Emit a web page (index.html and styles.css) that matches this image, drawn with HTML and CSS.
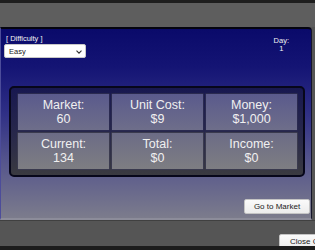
FILE: index.html
```html
<!DOCTYPE html>
<html>
<head>
<meta charset="utf-8">
<link rel="stylesheet" href="styles.css">
</head>
<body>
<div class="screen">
  <div class="topbar"></div>
  <div class="panel">
    <div class="header">
      <div class="difficulty">
        <div class="label">[ Difficulty ]</div>
        <div class="select">
          <span>Easy</span>
          <svg class="chev" width="6" height="4" viewBox="0 0 6 4"><path d="M0.5 0.7 L3 3.2 L5.5 0.7" fill="none" stroke="#333" stroke-width="1.1"/></svg>
        </div>
      </div>
      <div class="day">
        <div>Day:</div>
        <div>1</div>
      </div>
    </div>
    <div class="stats">
      <div class="cell top"><div>Market:</div><div>60</div></div>
      <div class="cell top"><div>Unit Cost:</div><div>$9</div></div>
      <div class="cell top"><div>Money:</div><div>$1,000</div></div>
      <div class="cell bottom"><div>Current:</div><div>134</div></div>
      <div class="cell bottom"><div>Total:</div><div>$0</div></div>
      <div class="cell bottom"><div>Income:</div><div>$0</div></div>
    </div>
    <div class="actions">
      <div class="btn">Go to Market</div>
    </div>
  </div>
  <div class="footer">
    <div class="btn close">Close Game</div>
  </div>
</div>
</body>
</html>
```
FILE: styles.css
```css
html, body {
  margin: 0;
  padding: 0;
  width: 315px;
  height: 250px;
  overflow: hidden;
  background: #1c1c1c;
  font-family: "Liberation Sans", Arial, sans-serif;
}
.screen {
  width: 315px;
  height: 246px;
  display: flex;
  flex-direction: column;
  overflow: hidden;
  background: #555555;
}
.topbar {
  height: 24px;
  flex: none;
  border-top: 3px solid #1e1e1e;
  background: #5e5e5e;
}
.panel {
  flex: none;
  box-sizing: border-box;
  width: 312px;
  height: 193px;
  border-top: 2px solid #050510;
  border-right: 1px solid #15152a;
  border-left: 1px solid #4c4c9a;
  border-bottom: 2px solid #8c8c9a;
  border-top-right-radius: 4px;
  background: linear-gradient(#0a0a6a 0%, #141474 20%, #303086 45%, #55558c 70%, #7c7c8c 100%);
  padding: 5px 1px 0 3px;
  display: flex;
  flex-direction: column;
}
.header {
  display: flex;
  justify-content: space-between;
  align-items: flex-start;
}
.label {
  color: #f2f2f2;
  font-size: 7.5px;
  line-height: 9px;
  margin-left: 2px;
}
.select {
  margin-top: 1px;
  box-sizing: border-box;
  width: 82px;
  height: 14px;
  background: #ffffff;
  border: 1px solid #c8c8c8;
  border-radius: 2px;
  display: flex;
  align-items: center;
  justify-content: space-between;
  padding: 0 3px 0 4px;
  font-size: 7.5px;
  color: #222;
}
.chev {
  display: block;
  margin-top: 1px;
}
.day {
  color: #f2f2f2;
  font-size: 7.5px;
  line-height: 8px;
  text-align: center;
  margin-top: 3px;
  margin-right: 21px;
}
.stats {
  margin-top: 28px;
  margin-left: 5px;
  box-sizing: border-box;
  width: 296px;
  height: 91px;
  border: 2px solid #07071a;
  border-radius: 5px;
  background: linear-gradient(#181850, #2a2a4a 60%, #3a3a40);
  padding: 5px 5px 5px 6px;
  display: grid;
  grid-template-columns: 93px 93px 93px;
  grid-template-rows: 38px 38px;
  gap: 1px;
}
.cell {
  box-sizing: border-box;
  border: 1px solid #2a2a50;
  border-radius: 1px;
  display: flex;
  flex-direction: column;
  align-items: center;
  justify-content: center;
  color: #f0f0f0;
  font-size: 12.5px;
  line-height: 14.5px;
}
.cell.top {
  background: linear-gradient(#5a5a8c, #6e6e8a);
}
.cell.bottom {
  background: linear-gradient(#6c6c86, #7e7e82);
  border-color: #3a3a4e;
}
.actions {
  margin-top: 22px;
  display: flex;
  justify-content: flex-end;
}
.btn {
  box-sizing: border-box;
  height: 15px;
  padding: 0 10px;
  background: linear-gradient(#fafafa, #ececec);
  border: 1px solid #c4c4c4;
  border-radius: 2px;
  font-size: 8px;
  line-height: 13px;
  color: #222;
  white-space: nowrap;
}
.actions .btn {
  width: 66px;
  text-align: center;
  padding: 0;
}
.footer {
  flex: none;
  height: 26px;
  background: #555555;
  border-top: 1px solid #404040;
  padding-top: 9px;
  padding-left: 279px;
  box-sizing: border-box;
  overflow: hidden;
}
.footer .close {
  display: inline-block;
  width: 60px;
}
```
